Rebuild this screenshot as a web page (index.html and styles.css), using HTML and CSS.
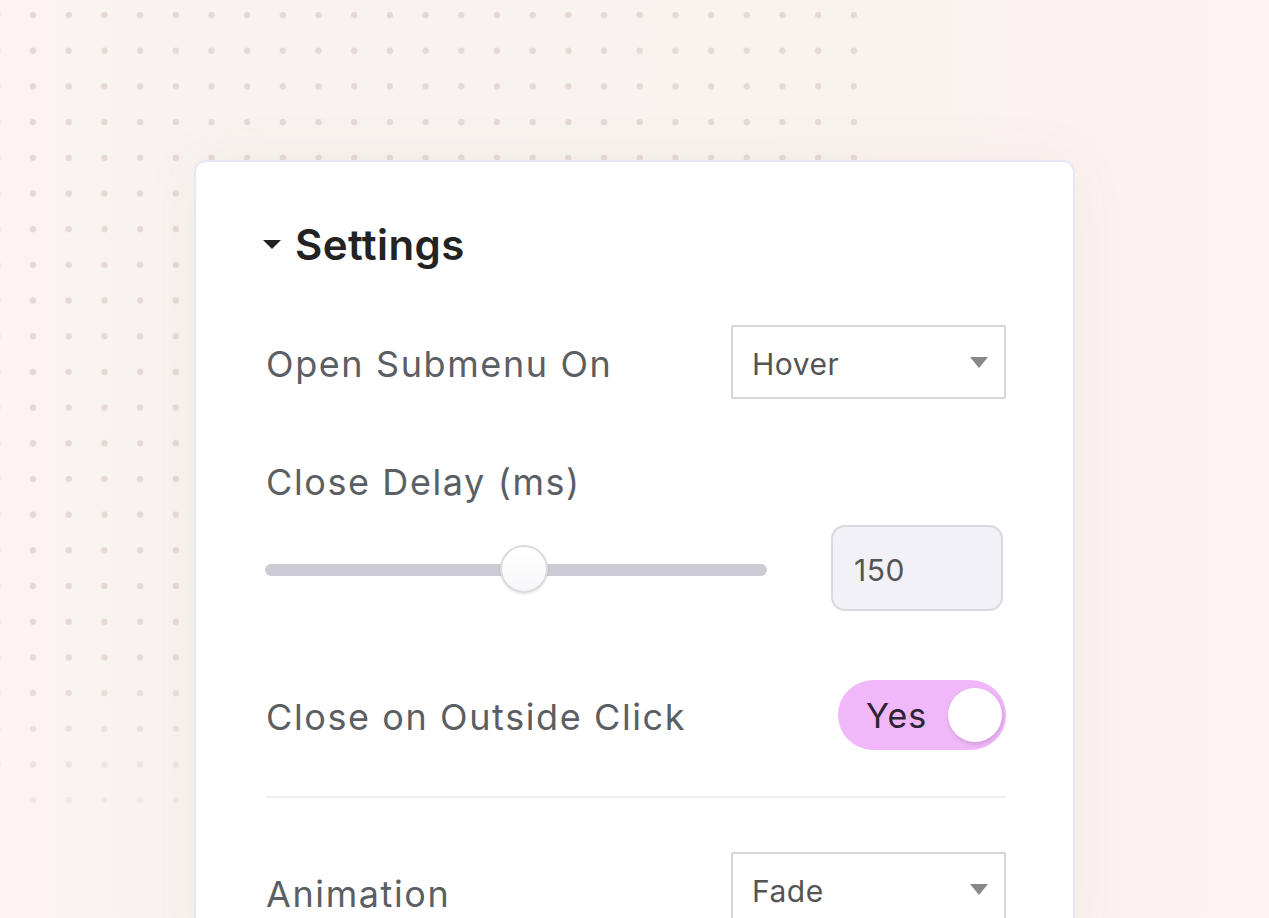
FILE: index.html
```html
<!DOCTYPE html>
<html lang="en">
    <head>
        <meta charset="UTF-8" />
        <meta name="viewport" content="width=device-width, initial-scale=1.0" />
        <title>Menu Settings</title>
        <link rel="stylesheet" href="styles.css">
    </head>
    <body>
        <div class="dots"></div>
        <div class="card">
            <h2 class="section-title"><span class="caret"></span>Settings</h2>

            <div class="row">
                <label class="label">Open Submenu On</label>
                <div class="select"><span>Hover</span><span class="arrow"></span></div>
            </div>

            <label class="label label-block">Close Delay (ms)</label>
            <div class="slider-row">
                <div class="track"><div class="thumb"></div></div>
                <div class="number">150</div>
            </div>

            <div class="row row-toggle">
                <label class="label">Close on Outside Click</label>
                <div class="toggle"><span>Yes</span><span class="knob"></span></div>
            </div>

            <hr class="divider" />

            <div class="row row-anim">
                <label class="label">Animation</label>
                <div class="select"><span>Fade</span><span class="arrow"></span></div>
            </div>
        </div>
    </body>
</html>
```

FILE: styles.css
```css
body {
    margin: 0;
    padding: 0;
    height: 918px;
    overflow: hidden;
    font-family: Inter, "Noto Sans", sans-serif;
    background: linear-gradient(90deg, #fcf4f2 0%, #f8f3f0 12%, #f8f3ef 60%, #fcf3f2 100%);
    position: relative;
}
.dots {
    position: absolute;
    left: 0;
    top: 0;
    width: 872px;
    height: 815px;
    background-image: radial-gradient(circle, #e6d8d5 3px, transparent 3.6px);
    background-size: 35.7px 35.7px;
    background-position: 15.2px -2.8px;
    -webkit-mask-image: linear-gradient(180deg, #000 80%, rgba(0, 0, 0, 0.4) 100%);
    mask-image: linear-gradient(180deg, #000 80%, rgba(0, 0, 0, 0.4) 100%);
}
.card {
    position: relative;
    margin: 160px 0 0 194px;
    width: 881px;
    height: 800px;
    box-sizing: border-box;
    padding: 58px 67px 0 70px;
    background-color: #ffffff;
    border: 2px solid #e8e5f6;
    border-radius: 12px;
    box-shadow: 0 0 60px rgba(140, 100, 80, 0.06);
}
.section-title {
    margin: 0;
    height: 48px;
    display: flex;
    align-items: center;
    font-size: 42px;
    font-weight: 600;
    color: #232323;
    letter-spacing: 0.4px;
}
.caret {
    width: 0;
    height: 0;
    margin: 0 14px 0 -3px;
    border-left: 9px solid transparent;
    border-right: 9px solid transparent;
    border-top: 9px solid #232323;
}
.row {
    display: flex;
    align-items: center;
    justify-content: space-between;
    margin-top: 57px;
}
.label {
    font-size: 36px;
    line-height: 44px;
    padding-top: 4px;
    letter-spacing: 1.6px;
    color: #5b5e63;
}
.label-block {
    display: block;
    margin-top: 57px;
}
.select {
    width: 275px;
    height: 74px;
    box-sizing: border-box;
    border: 2px solid #d6d6d6;
    border-radius: 2px;
    display: flex;
    align-items: center;
    justify-content: space-between;
    padding: 3px 16px 0 19px;
    font-size: 30px;
    letter-spacing: 0.5px;
    color: #545454;
}
.arrow {
    width: 0;
    height: 0;
    margin-top: -3px;
    border-left: 9px solid transparent;
    border-right: 9px solid transparent;
    border-top: 11px solid #888888;
}
.slider-row {
    display: flex;
    align-items: center;
    justify-content: space-between;
    margin: 21px 3px 0 -1px;
}
.track {
    position: relative;
    width: 502px;
    height: 12px;
    margin-top: 4px;
    border-radius: 6px;
    background-color: #cdccd5;
}
.thumb {
    position: absolute;
    left: 235px;
    top: -19px;
    width: 48px;
    height: 48px;
    box-sizing: border-box;
    border-radius: 50%;
    background: linear-gradient(180deg, #ffffff 0%, #f7f7f9 100%);
    border: 2px solid #dcdcdf;
    box-shadow: 0 1px 3px rgba(0, 0, 0, 0.12);
}
.number {
    width: 172px;
    height: 86px;
    box-sizing: border-box;
    border: 2px solid #d9d9de;
    border-radius: 14px;
    background-color: #f2f1f8;
    display: flex;
    align-items: center;
    padding: 3px 0 0 21px;
    font-size: 30px;
    letter-spacing: 0.5px;
    color: #555555;
}
.row-toggle {
    margin-top: 69px;
}
.toggle {
    width: 168px;
    height: 70px;
    box-sizing: border-box;
    border-radius: 35px;
    background-color: #f0b8f8;
    display: flex;
    align-items: center;
    justify-content: space-between;
    padding: 0 4px 0 28px;
    font-size: 34px;
    letter-spacing: 1px;
    color: #2d2433;
}
.knob {
    width: 54px;
    height: 54px;
    border-radius: 50%;
    background-color: #ffffff;
    box-shadow: 1px 2px 4px rgba(120, 60, 130, 0.25);
}
.divider {
    margin: 46px 0 0 0;
    border: none;
    height: 2px;
    background-color: #efefef;
}
.row-anim {
    margin-top: 54px;
    align-items: flex-start;
}
.row-anim .label {
    margin-top: 16px;
}
```
